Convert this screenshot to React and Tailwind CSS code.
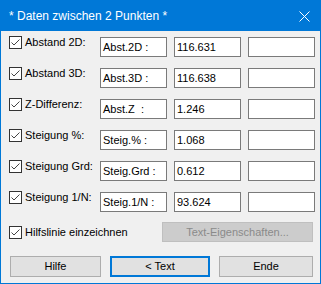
import React from 'react';

const rows = [
  { label: 'Abstand 2D:', name: 'Abst.2D :', value: '116.631' },
  { label: 'Abstand 3D:', name: 'Abst.3D :', value: '116.638' },
  { label: 'Z-Differenz:', name: 'Abst.Z  :', value: '1.246' },
  { label: 'Steigung %:', name: 'Steig.% :', value: '1.068' },
  { label: 'Steigung Grd:', name: 'Steig.Grd :', value: '0.612' },
  { label: 'Steigung 1/N:', name: 'Steig.1/N :', value: '93.624' },
];

function CheckBox() {
  return (
    <span className="w-[13px] h-[13px] shrink-0 border border-[#333333] bg-white flex items-center justify-center">
      <svg width="11" height="11" viewBox="0 0 11 11">
        <path d="M1.5 5.5 L4 8 L9.5 2.5" fill="none" stroke="#444444" strokeWidth="1" />
      </svg>
    </span>
  );
}

function TextBox({ children }) {
  return (
    <div className="w-[67px] h-[20px] border border-[#7a7a7a] bg-white pl-[2px] pt-[2px] leading-[14px] whitespace-pre text-black">
      {children}
    </div>
  );
}

export default function App() {
  return (
    <div className="w-[321px] h-[284px] border border-[#0078d7] bg-[#f0f0f0] flex flex-col text-[11px] text-black" style={{ fontFamily: '"Liberation Sans", Arial, sans-serif' }}>
      <div className="h-[30px] bg-[#0078d7] flex items-center justify-between pl-[8px] pr-[10px] shrink-0">
        <span className="text-white text-[12px]">
          * Daten zwischen 2 Punkten *
        </span>
        <svg width="11" height="11" viewBox="0 0 11 11">
          <path d="M0.5 0.5 L10.5 10.5 M10.5 0.5 L0.5 10.5" stroke="white" strokeWidth="1" />
        </svg>
      </div>

      <div className="flex flex-col gap-[11px] pt-[6px] pl-[8px]">
        {rows.map((r) => (
          <div key={r.label} className="flex h-[20px]">
            <div className="w-[91px] flex items-start gap-[3px] -mt-[1px]">
              <CheckBox />
              <span className="leading-[13px]">{r.label}</span>
            </div>
            <div className="flex gap-[7px]">
              <TextBox>{r.name}</TextBox>
              <TextBox>{r.value}</TextBox>
              <TextBox>{''}</TextBox>
            </div>
          </div>
        ))}
      </div>

      <div className="flex items-center h-[20px] mt-[10px] pl-[8px]">
        <div className="flex items-center gap-[3px] w-[153px]">
          <CheckBox />
          <span className="leading-[13px]">Hilfslinie einzeichnen</span>
        </div>
        <div className="w-[151px] h-[20px] bg-[#cccccc] border border-[#bfbfbf] text-[#8a8a8a] flex items-center justify-center">
          Text-Eigenschaften...
        </div>
      </div>

      <div className="flex mt-[14px] pl-[9px] gap-[9px]">
        <div className="w-[91px] h-[21px] bg-[#e1e1e1] border border-[#adadad] flex items-center justify-center">Hilfe</div>
        <div className="w-[100px] h-[21px] bg-[#e1e1e1] border-2 border-[#0078d7] flex items-center justify-center">&lt; Text</div>
        <div className="w-[94px] h-[21px] bg-[#e1e1e1] border border-[#adadad] flex items-center justify-center">Ende</div>
      </div>
    </div>
  );
}
